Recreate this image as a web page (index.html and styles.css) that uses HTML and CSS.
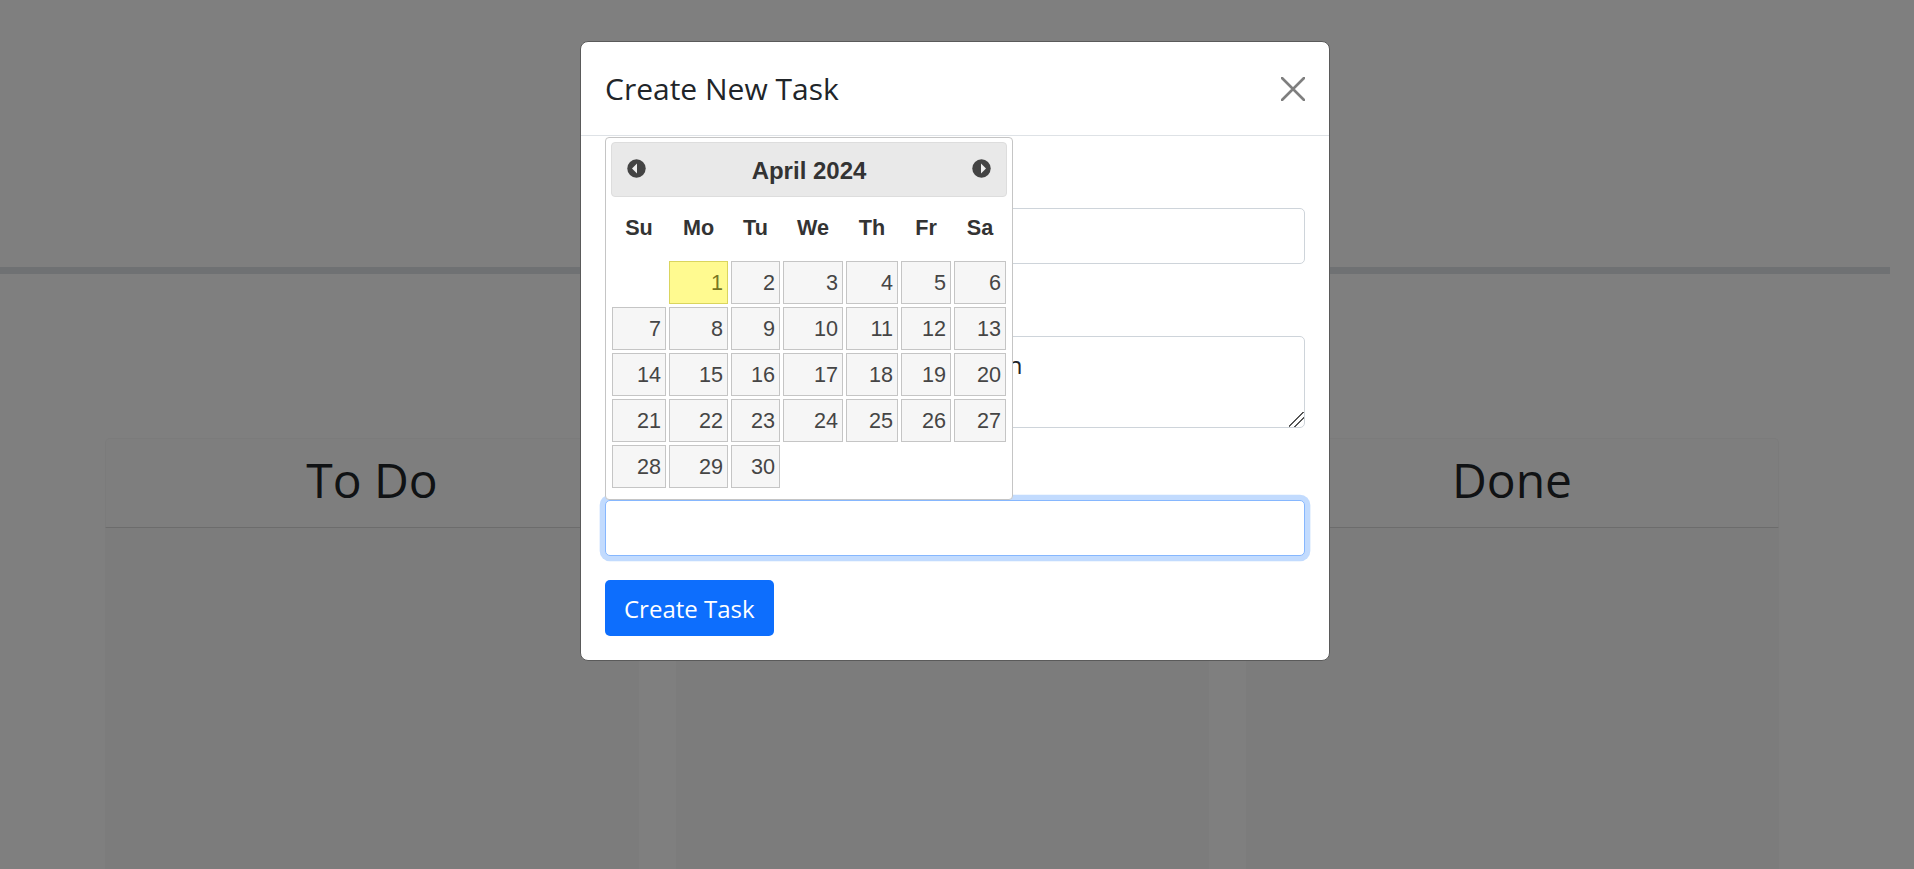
FILE: index.html
```html
<!DOCTYPE html>
<html lang="en">
    <head>
        <meta charset="UTF-8">
        <meta name="viewport" content="width=device-width, initial-scale=1.0">
        <title>Task Board</title>
        <link rel="stylesheet" href="styles.css">
    </head>
    <body>
        <div class="top-space"></div>
        <hr class="divider">

        <main class="board">
            <section class="column">
                <h2 class="column-title">To Do</h2>
                <div class="column-body"></div>
            </section>
            <section class="column">
                <h2 class="column-title" aria-label="In Progress"></h2>
                <div class="column-body"></div>
            </section>
            <section class="column">
                <h2 class="column-title">Done</h2>
                <div class="column-body"></div>
            </section>
        </main>

        <div class="backdrop">
            <div class="modal">
                <div class="modal-header">
                    <h5 class="modal-title">Create New Task</h5>
                    <button class="btn-close" aria-label="Close">
                        <svg width="24" height="24" viewBox="0 0 24 24">
                            <path d="M1 1L23 23M23 1L1 23" stroke="#7f7f7f" stroke-width="2.6" stroke-linecap="round"/>
                        </svg>
                    </button>
                </div>

                <form class="modal-body">
                    <div class="field-label"></div>
                    <input class="form-control" type="text" aria-label="Task Title">

                    <div class="field-label"></div>
                    <textarea class="form-control form-area" aria-label="Task Description">Review the project's documentation</textarea>

                    <div class="field-label"></div>
                    <input class="form-control is-focus" type="text" aria-label="Task Due Date">

                    <button class="btn-primary" type="button">Create Task</button>
                </form>

                <div class="datepicker">
                    <div class="dp-header">
                        <svg class="dp-arrow" width="19" height="19" viewBox="0 0 19 19">
                            <circle cx="9.5" cy="9.5" r="9.2" fill="#444"/>
                            <path d="M5 9.5L10 4.5V14.5Z" fill="#eee"/>
                        </svg>
                        <span class="dp-title">April 2024</span>
                        <svg class="dp-arrow" width="19" height="19" viewBox="0 0 19 19">
                            <circle cx="9.5" cy="9.5" r="9.2" fill="#444"/>
                            <path d="M14 9.5L9 4.5V14.5Z" fill="#eee"/>
                        </svg>
                    </div>

                    <div class="dp-weekdays">
                        <span>Su</span><span>Mo</span><span>Tu</span><span>We</span><span>Th</span><span>Fr</span><span>Sa</span>
                    </div>

                    <div class="dp-days">
                        <span></span>
                        <a class="dp-day dp-today">1</a>
                        <a class="dp-day">2</a>
                        <a class="dp-day">3</a>
                        <a class="dp-day">4</a>
                        <a class="dp-day">5</a>
                        <a class="dp-day">6</a>
                        <a class="dp-day">7</a>
                        <a class="dp-day">8</a>
                        <a class="dp-day">9</a>
                        <a class="dp-day">10</a>
                        <a class="dp-day">11</a>
                        <a class="dp-day">12</a>
                        <a class="dp-day">13</a>
                        <a class="dp-day">14</a>
                        <a class="dp-day">15</a>
                        <a class="dp-day">16</a>
                        <a class="dp-day">17</a>
                        <a class="dp-day">18</a>
                        <a class="dp-day">19</a>
                        <a class="dp-day">20</a>
                        <a class="dp-day">21</a>
                        <a class="dp-day">22</a>
                        <a class="dp-day">23</a>
                        <a class="dp-day">24</a>
                        <a class="dp-day">25</a>
                        <a class="dp-day">26</a>
                        <a class="dp-day">27</a>
                        <a class="dp-day">28</a>
                        <a class="dp-day">29</a>
                        <a class="dp-day">30</a>
                    </div>
                </div>
            </div>
        </div>
    </body>
</html>
```

FILE: styles.css
```css
* {
    padding: 0;
    margin: 0;
    box-sizing: border-box;
    font-family: "Open Sans", sans-serif;
}

html, body {
    height: 100%;
    overflow: hidden;
}

body {
    background-color: #fff;
    color: #212529;
}

.top-space {
    height: 267px;
}

.divider {
    width: 1890px;
    height: 7px;
    border: none;
    background-color: #dee2e6;
}

.board {
    display: grid;
    grid-template-columns: 534px 533.5px 533px;
    column-gap: 36.5px;
    padding-top: 164px;
    padding-left: 105px;
}

.column-title {
    height: 90px;
    padding-top: 8px;
    background-color: #fdfdfd;
    border: 1px solid #f6f6f6;
    border-bottom-color: #d8d8d8;
    border-radius: 5px 5px 0 0;
    font-size: 48px;
    font-weight: 400;
    line-height: 65px;
    text-align: center;
}

.column-body {
    height: 341px;
    background-color: #f8f8f8;
}

/* modal */
.backdrop {
    position: fixed;
    top: 0;
    left: 0;
    width: 100%;
    height: 100%;
    padding-top: 41px;
    padding-left: 580px;
    background-color: rgba(0, 0, 0, 0.5);
}

.modal {
    position: relative;
    width: 750px;
    height: 620px;
    background-color: #fff;
    border: 1px solid #5a5a5a;
    border-radius: 8px;
}

.modal-header {
    display: flex;
    align-items: center;
    justify-content: space-between;
    height: 94px;
    padding: 0 24px 0 24px;
    border-bottom: 1px solid #dee2e6;
}

.modal-title {
    padding-bottom: 1px;
    font-size: 30px;
    font-weight: 400;
}

.btn-close {
    display: flex;
    border: none;
    background: none;
}

.modal-body {
    display: flex;
    flex-direction: column;
    align-items: flex-start;
    padding: 21px 24px;
}

.field-label {
    height: 51px;
}

.form-control {
    width: 100%;
    height: 56px;
    margin-bottom: 21px;
    padding: 8px 16px;
    border: 1px solid #ced4da;
    border-radius: 5px;
    outline: 0;
    color: #212529;
    font-size: 24px;
    line-height: 36px;
}

.form-area {
    display: block;
    height: 92px;
    padding-top: 10px;
}

.form-area::-webkit-resizer {
    background: linear-gradient(135deg, transparent 9.8px, #555 9.8px, #555 10.8px, transparent 10.8px, transparent 14px, #555 14px, #555 15px, transparent 15px);
}

.is-focus {
    margin-bottom: 24px;
    border-color: #86b7fe;
    box-shadow: 0 0 0 5.33px rgba(13, 110, 253, 0.25);
}

.btn-primary {
    height: 56px;
    padding: 0 19px;
    border: none;
    border-radius: 5px;
    background-color: #0d6efd;
    color: #fff;
    font-size: 24px;
}

/* calendar popup */
.datepicker {
    position: absolute;
    top: 95px;
    left: 24px;
    width: 408px;
    height: 363px;
    padding: 4px 5px;
    background-color: #fff;
    border: 1px solid #c5c5c5;
    border-radius: 4px;
}

.datepicker * {
    font-family: "Liberation Sans", Arial, sans-serif;
}

.dp-header {
    display: flex;
    align-items: center;
    justify-content: space-between;
    height: 55px;
    padding: 0 15px 3px 15px;
    background-color: #e9e9e9;
    border: 1px solid #ddd;
    border-radius: 4px;
}

.dp-title {
    padding-top: 5px;
    color: #333;
    font-size: 24px;
    font-weight: 700;
}

.dp-weekdays, .dp-days {
    display: grid;
    grid-template-columns: 54px 59px 49px 60px 52px 50px 52px;
    column-gap: 3px;
    padding-left: 1px;
}

.dp-weekdays {
    height: 64px;
    align-items: center;
    padding-bottom: 2px;
    color: #333;
    font-size: 21.6px;
    font-weight: 700;
    text-align: center;
}

.dp-days {
    grid-auto-rows: 43px;
    row-gap: 3px;
}

.dp-day {
    padding-right: 4px;
    background-color: #f6f6f6;
    border: 1px solid #c5c5c5;
    color: #454545;
    font-size: 21.6px;
    line-height: 42px;
    text-align: right;
}

.dp-today {
    background-color: #fffa90;
    border-color: #dad55e;
    color: #777620;
}
```
